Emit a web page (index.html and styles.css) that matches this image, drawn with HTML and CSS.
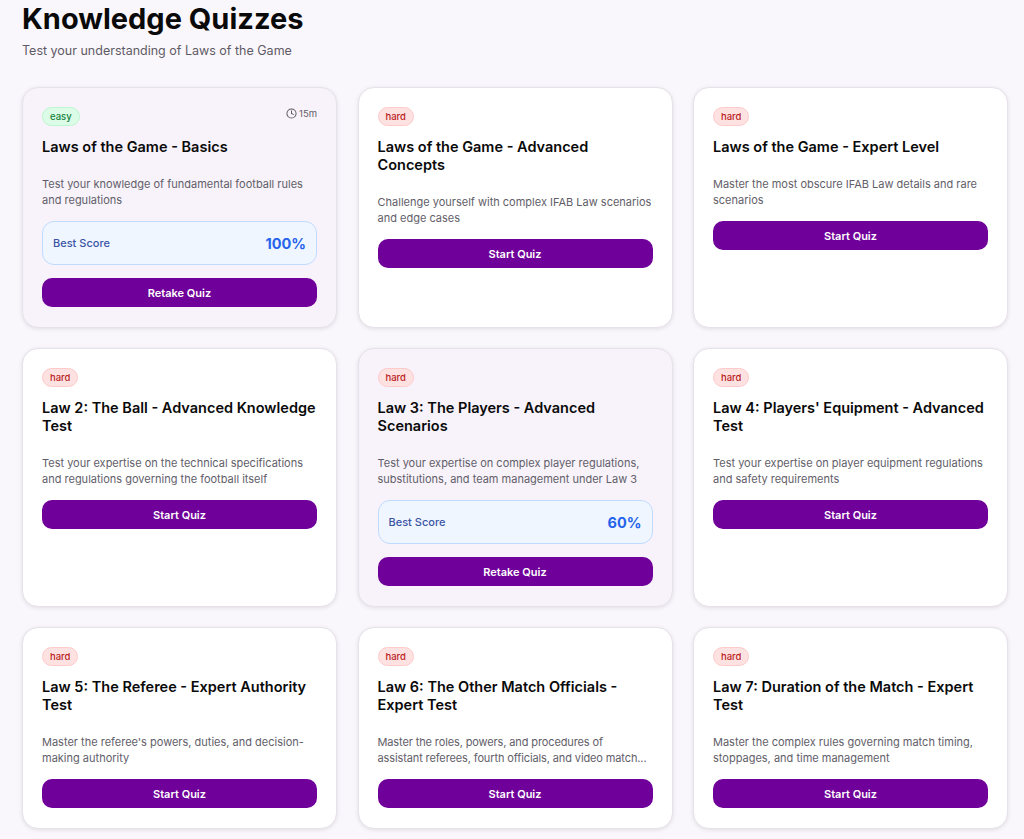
FILE: index.html
```html
<!DOCTYPE html>
<html lang="en">
<head>
    <meta charset="UTF-8">
    <meta name="viewport" content="width=device-width, initial-scale=1.0">
    <title>Knowledge Quizzes</title>
    <link rel="stylesheet" href="styles.css">
</head>
<body>
    <header class="page-head">
        <h1>Knowledge Quizzes</h1>
        <p>Test your understanding of Laws of the Game</p>
    </header>

    <div class="quiz-grid">
        <div class="card done">
            <div class="card-top">
                <span class="pill easy">easy</span>
                <span class="time">
                    <svg width="11" height="11" viewBox="0 0 24 24" fill="none" stroke="currentColor" stroke-width="2.2" stroke-linecap="round" stroke-linejoin="round"><circle cx="12" cy="12" r="10"/><path d="M12 6v6l4 2"/></svg>
                    15m
                </span>
            </div>
            <h3>Laws of the Game - Basics</h3>
            <p class="desc">Test your knowledge of fundamental football rules and regulations</p>
            <div class="score"><span>Best Score</span><strong>100%</strong></div>
            <button>Retake Quiz</button>
        </div>

        <div class="card">
            <div class="card-top"><span class="pill hard">hard</span></div>
            <h3>Laws of the Game - Advanced Concepts</h3>
            <p class="desc">Challenge yourself with complex IFAB Law scenarios and edge cases</p>
            <button>Start Quiz</button>
        </div>

        <div class="card">
            <div class="card-top"><span class="pill hard">hard</span></div>
            <h3>Laws of the Game - Expert Level</h3>
            <p class="desc">Master the most obscure IFAB Law details and rare scenarios</p>
            <button>Start Quiz</button>
        </div>

        <div class="card">
            <div class="card-top"><span class="pill hard">hard</span></div>
            <h3>Law 2: The Ball - Advanced Knowledge Test</h3>
            <p class="desc">Test your expertise on the technical specifications and regulations governing the football itself</p>
            <button>Start Quiz</button>
        </div>

        <div class="card done">
            <div class="card-top"><span class="pill hard">hard</span></div>
            <h3>Law 3: The Players - Advanced Scenarios</h3>
            <p class="desc">Test your expertise on complex player regulations, substitutions, and team management under Law 3</p>
            <div class="score"><span>Best Score</span><strong>60%</strong></div>
            <button>Retake Quiz</button>
        </div>

        <div class="card">
            <div class="card-top"><span class="pill hard">hard</span></div>
            <h3>Law 4: Players' Equipment - Advanced Test</h3>
            <p class="desc">Test your expertise on player equipment regulations and safety requirements</p>
            <button>Start Quiz</button>
        </div>

        <div class="card">
            <div class="card-top"><span class="pill hard">hard</span></div>
            <h3>Law 5: The Referee - Expert Authority Test</h3>
            <p class="desc">Master the referee's powers, duties, and decision-making authority</p>
            <button>Start Quiz</button>
        </div>

        <div class="card">
            <div class="card-top"><span class="pill hard">hard</span></div>
            <h3>Law 6: The Other Match Officials - Expert Test</h3>
            <p class="desc tight">Master the roles, powers, and procedures of<br>assistant referees, fourth officials, and video match...</p>
            <button>Start Quiz</button>
        </div>

        <div class="card">
            <div class="card-top"><span class="pill hard">hard</span></div>
            <h3>Law 7: Duration of the Match - Expert Test</h3>
            <p class="desc">Master the complex rules governing match timing, stoppages, and time management</p>
            <button>Start Quiz</button>
        </div>
    </div>
</body>
</html>
```

FILE: styles.css
```css
body {
    font-family: Inter, "Noto Sans", sans-serif;
    background-color: #faf7fc;
    color: #0a0a0a;
    margin: 0;
    padding: 0 16px 11px 22px;
}

.page-head h1 {
    margin: 0;
    font-size: 29px;
    line-height: 37px;
    font-weight: 700;
}

.page-head p {
    margin: 5px 0 0;
    font-size: 12.5px;
    line-height: 18px;
    color: #5f5b66;
}

.quiz-grid {
    display: grid;
    grid-template-columns: repeat(3, 1fr);
    gap: 20.5px;
    margin-top: 27px;
}

.card {
    display: flex;
    flex-direction: column;
    background-color: #fff;
    border: 1.5px solid #e6e1ea;
    border-radius: 16px;
    box-shadow: 0 1px 4px rgba(0, 0, 0, 0.1);
    padding: 19px 19px 19.5px;
}

.card.done {
    background-color: #f8f3fa;
}

.card-top {
    display: flex;
    justify-content: space-between;
    align-items: flex-start;
    min-height: 19px;
}

.pill {
    font-size: 9.5px;
    line-height: 17px;
    font-weight: 500;
    padding: 0 7px;
    border-radius: 10px;
    border: 1px solid;
}

.pill.easy {
    background-color: #dcfce7;
    border-color: #bbf7d0;
    color: #15803d;
}

.pill.hard {
    background-color: #fee2e2;
    border-color: #fecaca;
    color: #b91c1c;
}

.time {
    display: flex;
    align-items: center;
    gap: 2px;
    font-size: 9.5px;
    line-height: 13px;
    color: #5f5b66;
}

.card h3 {
    margin: 12px 0 0;
    font-size: 14.5px;
    line-height: 18px;
    font-weight: 600;
}

.desc {
    margin: 20px 0 0;
    font-size: 11px;
    line-height: 16px;
    color: #625e69;
}

.desc.tight {
    letter-spacing: -0.12px;
}

.score {
    display: flex;
    justify-content: space-between;
    align-items: center;
    height: 44px;
    box-sizing: border-box;
    margin-top: 13px;
    padding: 0 10px;
    background-color: #eff6ff;
    border: 1px solid #bfdbfe;
    border-radius: 12px;
}

.score span {
    font-size: 11px;
    font-weight: 500;
    color: #3b55a5;
}

.score strong {
    font-size: 14.5px;
    font-weight: 700;
    color: #2563eb;
}

button {
    height: 29px;
    margin-top: 13px;
    border: none;
    border-radius: 10px;
    background-color: #6f0099;
    color: #fff;
    font-family: inherit;
    font-size: 11px;
    font-weight: 600;
    cursor: pointer;
}
```
